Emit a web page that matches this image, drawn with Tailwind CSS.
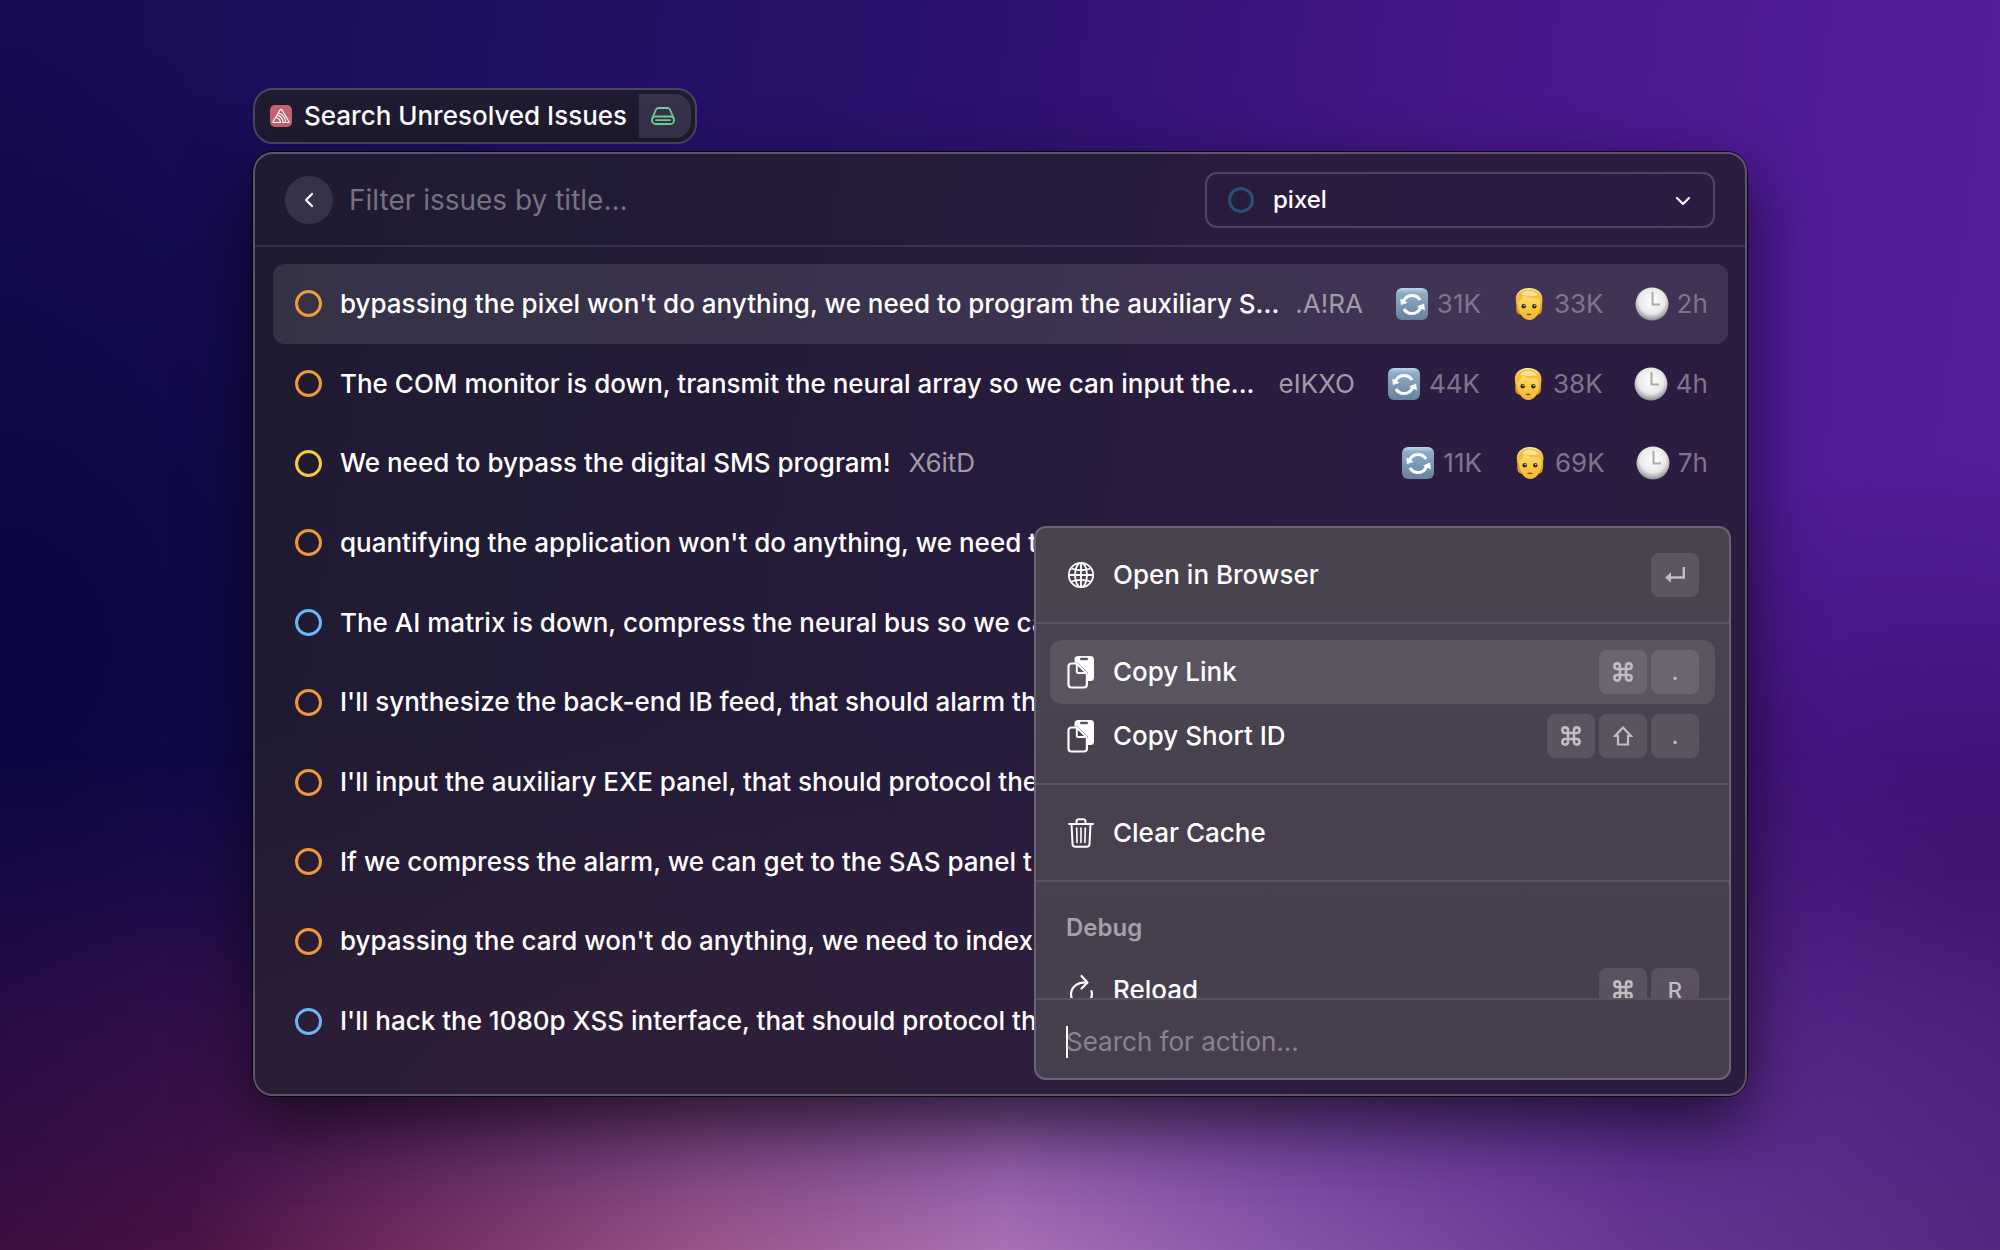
<!DOCTYPE html>
<html lang="en">
<head>
<meta charset="utf-8">
<title>Search Unresolved Issues</title>
<script src="https://cdn.jsdelivr.net/npm/@tailwindcss/browser@4"></script>
</head>
<body class="min-h-screen overflow-x-hidden bg-[#1b0e58] font-['Inter',sans-serif] text-[26px] leading-8 text-white">
<svg width="0" height="0" class="absolute" aria-hidden="true">
  <defs>
    <linearGradient id="g-blue" x1="0" y1="0" x2="0" y2="1"><stop offset="0" stop-color="#c3d6e6"/><stop offset=".15" stop-color="#8fadc8"/><stop offset="1" stop-color="#66829c"/></linearGradient>
    <radialGradient id="g-clock" cx=".5" cy=".4" r=".6"><stop offset="0" stop-color="#ffffff"/><stop offset=".65" stop-color="#e9e9ea"/><stop offset="1" stop-color="#8d8d92"/></radialGradient>
    <linearGradient id="g-face" x1="0" y1="0" x2="0" y2="1"><stop offset="0" stop-color="#ffe06a"/><stop offset="1" stop-color="#f3b42c"/></linearGradient>
    <linearGradient id="g-hair" x1="0" y1="0" x2="0" y2="1"><stop offset="0" stop-color="#fff0b8"/><stop offset=".3" stop-color="#fbcd50"/><stop offset="1" stop-color="#d9920f"/></linearGradient>
    <symbol id="i-cycle" viewBox="0 0 34 34"><rect x="1" y="1" width="32" height="32" rx="6" fill="url(#g-blue)"/><path d="M8.500 14.500C10 10.500 13.500 8.500 17 8.500c3.500 0 6.400 1.700 8 4.500" fill="none" stroke="#fff" stroke-width="3.200"/><path d="M5.300 11.500l.6 6.500 6.800-2.300z" fill="#fff"/><path d="M25.500 20.500c-1.500 4-5 6-8.500 6s-6.400-1.700-8-4.500" fill="none" stroke="#fff" stroke-width="3.200"/><path d="M30 23.500l-1-7-7 3z" fill="#fff"/></symbol>
    <symbol id="i-face" viewBox="0 0 34 34"><path d="M4 14C2.500 6.500 9 1 17 1s14.500 5 13.300 13c-.5 3 .2 6-.6 9.500-.4 2.500-1.700 3.800-3.700 4.200H8.500c-2.200-.4-3.600-1.700-4-4.200-.5-3.500.3-6.500-.5-9.500z" fill="url(#g-hair)"/><path d="M6 15c0-4 2-6.500 4.500-8l13.500 4c3 1 4.200 2.500 4.200 6C28.200 26 23.800 33 17.200 33S6 25 6 15z" fill="url(#g-face)"/><path d="M4.300 17C3 8.500 8 2.500 17 2.500S31 8.500 29.900 17c-.7-2.300-2-4.300-3.700-5.500-5 .3-10.500-.7-14.700-3.500C10.500 11.500 8 15 4.300 17z" fill="#f5bb42"/><path d="M9 7.500C13 2.500 22 2.500 26 8.500c-6 .8-12 .5-17-1z" fill="#ffe394"/><circle cx="11.700" cy="19.200" r="2.200" fill="#38240e"/><circle cx="22.300" cy="19.200" r="2.200" fill="#38240e"/><circle cx="12.200" cy="18.500" r=".7" fill="#fff"/><circle cx="22.800" cy="18.500" r=".7" fill="#fff"/><path d="M14 27.300c2-1.200 4-1.200 6 0-1.800 1.300-4.200 1.300-6 0z" fill="#8c4a1b"/></symbol>
    <symbol id="i-clock" viewBox="0 0 34 34"><circle cx="17" cy="17" r="16.500" fill="url(#g-clock)"/><path d="M17.500 5v12.500H25" fill="none" stroke="#aaa9a8" stroke-width="2"/></symbol>
    <symbol id="i-globe" viewBox="-1 -4 28 34"><g fill="none" stroke="#fff" stroke-width="1.800"><circle cx="13" cy="13" r="12.200"/><ellipse cx="13" cy="13" rx="6" ry="12.200"/><path d="M13 1v24M1 13h24M3.500 6.500c5 2.300 14 2.300 19 0M3.500 19.500c5-2.300 14-2.300 19 0"/></g></symbol>
    <symbol id="i-copy" viewBox="0 0 28 34"><path d="M10.500 1h13A3.500 3.500 0 0 1 27 4.500v18a3.500 3.500 0 0 1-3.500 3.500H21v-6.500c0-1.200-.3-2-1.200-3L12 8.800c-.9-.9-2-1.300-3.300-1.300H7.500v-3A3.500 3.500 0 0 1 10.500 1z" fill="#fff"/><rect x="13" y="2.800" width="8" height="2.400" rx="1.200" fill="#5a5360"/><path d="M4.500 8.500h4c1 0 1.700.3 2.400 1l8 8c.7.7 1 1.400 1 2.400V29.500a3 3 0 0 1-3 3H4.500a3 3 0 0 1-3-3V11.500a3 3 0 0 1 3-3z" fill="none" stroke="#fff" stroke-width="2.200"/><path d="M9.800 9v7.500c0 1 .5 1.500 1.500 1.500H19" fill="none" stroke="#fff" stroke-width="2"/></symbol>
    <symbol id="i-trash" viewBox="-1 -2 28 34"><g fill="none" stroke="#fff" stroke-width="2" stroke-linecap="round"><path d="M1 6h24M8.500 6V3.500C8.500 2 9.300 1.200 10.800 1.200h4.400c1.500 0 2.300.8 2.300 2.300V6M3.500 6l1 20c.1 1.800 1.200 2.800 3 2.800h11c1.800 0 2.900-1 3-2.800l1-20"/><path d="M8.700 10l.4 14.500M13 10v14.500M17.300 10l-.4 14.500" stroke-width="1.600"/></g></symbol>
    <symbol id="i-reload" viewBox="0 0 28 34"><g fill="none" stroke="#fff" stroke-width="2.200" stroke-linecap="round" stroke-linejoin="round"><path d="M20 9.500C10 9 4 14.500 4 21.500c0 2.700 1 5 2.800 7"/><path d="M14.500 3l6 6.500-6 6"/><path d="M24.500 18c1 4 .2 7.500-2.500 10.500"/></g></symbol>
  </defs>
</svg>

<main class="relative isolate flex min-h-screen flex-col overflow-hidden px-[253px] pt-[88px] pb-[154px]">
  <!-- wallpaper -->
  <div class="absolute inset-0 -z-10 bg-[radial-gradient(ellipse_28%_50%_at_0%_52%,#0c0742_20%,#0c074200_100%),radial-gradient(ellipse_30%_34%_at_100%_70%,#3d1072_10%,#3d107200_100%),linear-gradient(97deg,#160c52_0%,#1c0f5e_20%,#2d1170_46%,#431686_66%,#4f1b97_85%,#541f9c_100%)]"></div>
  <div class="absolute inset-x-0 bottom-0 -z-10 h-[500px] bg-[linear-gradient(94deg,#3a0d40_0%,#4a1244_11%,#6f2a5c_21%,#985488_36%,#aa70b4_51%,#8655a8_65%,#653692_82%,#522880_100%)] [mask-image:linear-gradient(to_top,#000_0%,#000000c0_20%,#0000008c_45%,#00000033_75%,transparent_100%)]"></div>

  <div class="flex h-14 items-center gap-3 self-start rounded-[20px] border-2 border-[#4b455f] bg-[#1f1b30] py-1 pr-1 pl-[15px] font-medium">
    <svg class="size-[22px]" viewBox="0 0 22 22" role="img" aria-label="Sentry"><rect width="22" height="22" rx="5" fill="#c7626f"/><g fill="none" stroke="#fff" stroke-width="1.200" stroke-linecap="round" stroke-linejoin="round"><path d="M6 17.500H3.600c-.7 0-.8-.5-.5-1L10.200 4.800c.4-.7 1.200-.7 1.600 0l7.100 11.700c.3.500.2 1-.5 1h-1.700"/><path d="M9 8c4.200 1.800 6.500 5 6.600 9.500H13c0-3.300-1.800-5.900-5.200-7.400"/><path d="M6.400 12.500c2.600 1 3.900 2.700 4.100 5H6"/></g></svg>
    <h1>Search Unresolved Issues</h1>
    <div class="flex h-full w-[52px] items-center justify-center rounded-r-2xl bg-[#37324a] pr-1">
      <svg class="h-[18px] w-6" viewBox="0 0 24 18" fill="none" stroke="#6fcf97" stroke-width="1.800" stroke-linecap="round" stroke-linejoin="round"><path d="M1.200 11.500L4.800 3C5.300 1.600 6.200 1 7.600 1h8.800c1.400 0 2.300.6 2.800 2l3.600 8.500"/><rect x="1" y="9.500" width="22" height="7.500" rx="3.500"/><path d="M5 13.200h14"/></svg>
    </div>
  </div>

  <section class="relative mt-2 rounded-[20px] border-2 border-[#5d5668] bg-[linear-gradient(100deg,#1f1b30_0%,#241b38_35%,#2c1c42_75%,#2b1b3e_100%)] shadow-[0_0_0_1px_#000000cc,0_28px_68px_0px_#000000a6]">
    <div class="pointer-events-none absolute inset-0 rounded-[18px] bg-[radial-gradient(ellipse_70%_40%_at_25%_100%,#3a213a99_0%,#3a213a00_100%)]"></div>
    <header class="relative flex h-[93px] items-center border-b-2 border-white/10 px-[30px]">
      <button type="button" aria-label="Back" class="flex size-12 items-center justify-center rounded-full bg-[#37324a]">
        <svg class="h-4 w-[10px]" viewBox="0 0 10 16" fill="none" stroke="#fff" stroke-width="2.200" stroke-linecap="round" stroke-linejoin="round"><path d="M8 2L2 8l6 6"/></svg>
      </button>
      <input type="text" aria-label="Filter issues by title" placeholder="Filter issues by title..." class="ml-4 min-w-0 flex-1 bg-transparent text-[28px] outline-none placeholder:text-[#777280]">
      <div class="relative w-[510px]">
        <select aria-label="Project" class="h-14 w-full appearance-none rounded-xl border-2 border-[#504664] bg-transparent pl-[66px] text-[24px] font-medium"><option>pixel</option></select>
        <span class="pointer-events-none absolute top-[15px] left-[23px] size-[26px] rounded-full border-[3px] border-[#285078]"></span>
        <svg class="pointer-events-none absolute top-6 right-6 h-[10px] w-4" viewBox="0 0 16 10" fill="none" stroke="#fff" stroke-width="2.200" stroke-linecap="round" stroke-linejoin="round"><path d="M2 2l6 6 6-6"/></svg>
      </div>
    </header>

    <ul id="issues" class="relative mr-5 ml-[18px] mt-[17px] mb-[33px] grid h-[797px] grid-rows-10"></ul>

    <div class="absolute right-[14px] bottom-[14px] flex h-[554px] w-[697px] flex-col overflow-hidden rounded-xl border-2 border-[#6b6573] bg-[linear-gradient(180deg,#494350,#463d4d)]">
      <div id="actions" class="min-h-0 flex-1 overflow-hidden"></div>
      <div class="h-20 shrink-0 border-t-2 border-white/10 px-[30px] py-[26px]">
        <label class="flex h-8 items-center"><span class="h-8 w-[2px] bg-white"></span><input type="text" aria-label="Search for action" placeholder="Search for action..." class="-ml-[2px] min-w-0 flex-1 bg-transparent outline-none placeholder:text-[#88838d]"></label>
      </div>
    </div>
  </section>
</main>

<script>
const issues = [
  ["orange", "bypassing the pixel won't do anything, we need to program the auxiliary S...", ".A!RA", "31K", "33K", "2h", true],
  ["orange", "The COM monitor is down, transmit the neural array so we can input the...", "eIKXO", "44K", "38K", "4h", true],
  ["yellow", "We need to bypass the digital SMS program!", "X6itD", "11K", "69K", "7h", false],
  ["orange", "quantifying the application won't do anything, we need t"],
  ["blue", "The AI matrix is down, compress the neural bus so we ca"],
  ["orange", "I'll synthesize the back-end IB feed, that should alarm th"],
  ["orange", "I'll input the auxiliary EXE panel, that should protocol the"],
  ["orange", "If we compress the alarm, we can get to the SAS panel t"],
  ["orange", "bypassing the card won't do anything, we need to index"],
  ["blue", "I'll hack the 1080p XSS interface, that should protocol th"],
];
const ring = { orange: "border-[#f0983a]", yellow: "border-[#f6c944]", blue: "border-[#6cb8f5]" };
const stat = (icon, v) => `<span class="flex items-center gap-2"><svg class="size-[34px]"><use href="#${icon}"/></svg>${v}</span>`;
document.getElementById("issues").innerHTML = issues.map(([c, t, id, a, b, h, long], i) => `
  <li class="flex items-center rounded-xl pr-5 pl-[22px] ${i ? "" : "bg-white/10"}">
    <span class="size-[27px] shrink-0 rounded-full border-[3px] ${ring[c]}"></span>
    <span class="ml-[18px] whitespace-nowrap font-medium ${long ? "min-w-0 flex-1" : ""}">${t}</span>
    ${id ? `<span class="${long ? "ml-4" : "ml-[18px]"} text-[#a19ca8]">${id}</span>
    <span class="ml-auto flex gap-[31px] pl-8 text-[#7e758b]">${stat("i-cycle", a)}${stat("i-face", b)}${stat("i-clock", h)}</span>` : ""}
  </li>`).join("");

const glyphs = {
  cmd: `<svg class="size-5" viewBox="0 0 20 20" fill="none" stroke="currentColor" stroke-width="2.600"><path d="M7 7V4.200A2.800 2.800 0 1 0 4.200 7h11.600A2.800 2.800 0 1 0 13 4.200v11.600a2.800 2.800 0 1 0 2.800-2.800H4.200A2.800 2.800 0 1 0 7 15.800z"/></svg>`,
  shift: `<svg class="size-5" viewBox="0 0 20 20" fill="none" stroke="currentColor" stroke-width="2.200"><path d="M10 1.500L18 10h-3v8.500H5V10H2z"/></svg>`,
  enter: `<svg class="h-4 w-5" viewBox="0 0 20 16" fill="none" stroke="currentColor" stroke-width="2.400"><path d="M18.800 0v10.500H4"/><path d="M0 10.500l6-5.300v10.600z" fill="currentColor" stroke="none"/></svg>`,
};
const key = k => `<kbd class="flex h-11 w-12 items-center justify-center rounded-lg bg-white/10 font-['Inter',sans-serif] text-[22px] font-medium text-[#c0bdc3]">${glyphs[k] || k}</kbd>`;
const item = (icon, t, keys, on) => `
  <button type="button" class="flex h-16 w-full items-center rounded-xl pr-4 pl-[17px] text-left ${on ? "bg-white/10" : ""}">
    <svg class="h-[34px] w-7 shrink-0"><use href="#${icon}"/></svg><span class="ml-[18px] flex-1 font-medium">${t}</span>
    <span class="flex gap-1">${keys.map(key).join("")}</span>
  </button>`;
const group = html => `<div class="border-b-2 border-white/10 px-[14px] pt-4 pb-[15px] first:pt-[15px] last:border-b-0">${html}</div>`;
document.getElementById("actions").innerHTML =
  group(item("i-globe", "Open in Browser", ["enter"])) +
  group(item("i-copy", "Copy Link", ["cmd", "."], true) + item("i-copy", "Copy Short ID", ["cmd", "shift", "."])) +
  group(item("i-trash", "Clear Cache", [])) +
  group(`<h2 class="px-4 py-[14px] text-[24px] font-semibold text-[#a5a1a9]">Debug</h2>` + item("i-reload", "Reload", ["cmd", "R"]));
</script>
</body>
</html>
